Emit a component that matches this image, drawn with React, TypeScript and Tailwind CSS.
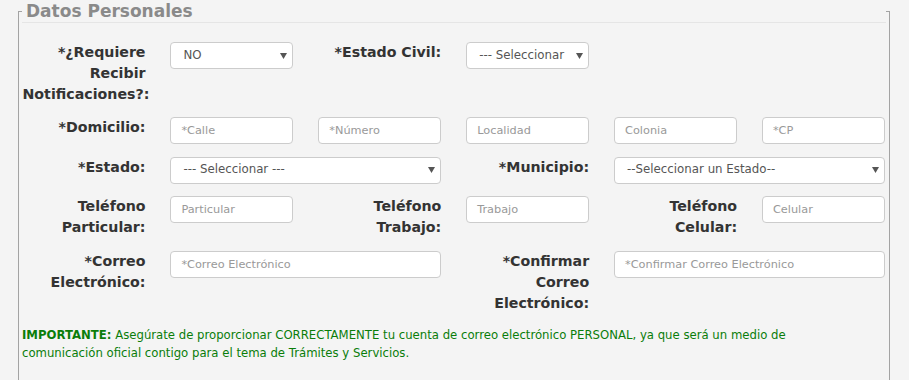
import React from "react";

const font = { fontFamily: '"DejaVu Sans", Verdana, sans-serif' };

function Label({ children, className = "" }: { children: React.ReactNode; className?: string }) {
  return (
    <div className={`text-right text-[14.2px] font-bold leading-[21px] text-[#333] ${className}`}>{children}</div>
  );
}

function Input({ placeholder, className = "" }: { placeholder: string; className?: string }) {
  return (
    <div className={`h-[27px] rounded-[4px] border border-[#ccc] bg-white pl-[10px] text-[11.3px] leading-[25px] text-[#999] ${className}`}>
      {placeholder}
    </div>
  );
}

function Select({ value, className = "" }: { value: string; className?: string }) {
  return (
    <div className={`flex h-[27px] items-center justify-between rounded-[4px] border border-[#ccc] bg-white pl-[12px] pr-[5px] text-[11.8px] text-[#555] ${className}`}>
      <span className="whitespace-nowrap">{value}</span>
      <svg width="7" height="6" viewBox="0 0 7 6" className="shrink-0">
        <polygon points="0,0 7,0 3.5,6" fill="#555" />
      </svg>
    </div>
  );
}

export default function App() {
  return (
    <div className="h-[380px] w-[909px] overflow-hidden bg-[#f4f4f4]" style={font}>
      <fieldset className="ml-[18px] mr-[19px] border border-[#a3a3a3] px-[3px] pb-[40px]">
        <legend className="w-full border-b border-[#e5e5e5] pl-[4px] text-[17px] font-bold leading-[22px] text-[#8a8a8a]">
          Datos Personales
        </legend>
        <div className="ml-[0.5px] mt-[19px] grid grid-cols-[repeat(6,123px)] gap-x-[24.9px] gap-y-[12.4px]">
          {/* Row 1 */}
          <Label>
            *¿Requiere
            <br />
            Recibir
            <br />
            Notificaciones?:
          </Label>
          <Select value="NO" />
          <Label>*Estado Civil:</Label>
          <Select value="--- Seleccionar" />
          <div />
          <div />

          {/* Row 2 */}
          <Label>*Domicilio:</Label>
          <Input placeholder="*Calle" />
          <Input placeholder="*Número" />
          <Input placeholder="Localidad" />
          <Input placeholder="Colonia" />
          <Input placeholder="*CP" />

          {/* Row 3 */}
          <Label>*Estado:</Label>
          <Select value="--- Seleccionar ---" className="col-span-2" />
          <Label>*Municipio:</Label>
          <Select value="--Seleccionar un Estado--" className="col-span-2" />

          {/* Row 4 */}
          <Label>
            Teléfono
            <br />
            Particular:
          </Label>
          <Input placeholder="Particular" />
          <Label>
            Teléfono
            <br />
            Trabajo:
          </Label>
          <Input placeholder="Trabajo" />
          <Label>
            Teléfono
            <br />
            Celular:
          </Label>
          <Input placeholder="Celular" />

          {/* Row 5 */}
          <Label>
            *Correo
            <br />
            Electrónico:
          </Label>
          <Input placeholder="*Correo Electrónico" className="col-span-2" />
          <Label>
            *Confirmar
            <br />
            Correo
            <br />
            Electrónico:
          </Label>
          <Input placeholder="*Confirmar Correo Electrónico" className="col-span-2" />
        </div>
        <p className="mt-[12px] text-[11.7px] leading-[18px] text-[#0a7d0a]">
          <span className="font-bold">IMPORTANTE:</span> Asegúrate de proporcionar CORRECTAMENTE tu cuenta de correo
          electrónico PERSONAL, ya que será un medio de
          <br />
          comunicación oficial contigo para el tema de Trámites y Servicios.
        </p>
      </fieldset>
    </div>
  );
}
